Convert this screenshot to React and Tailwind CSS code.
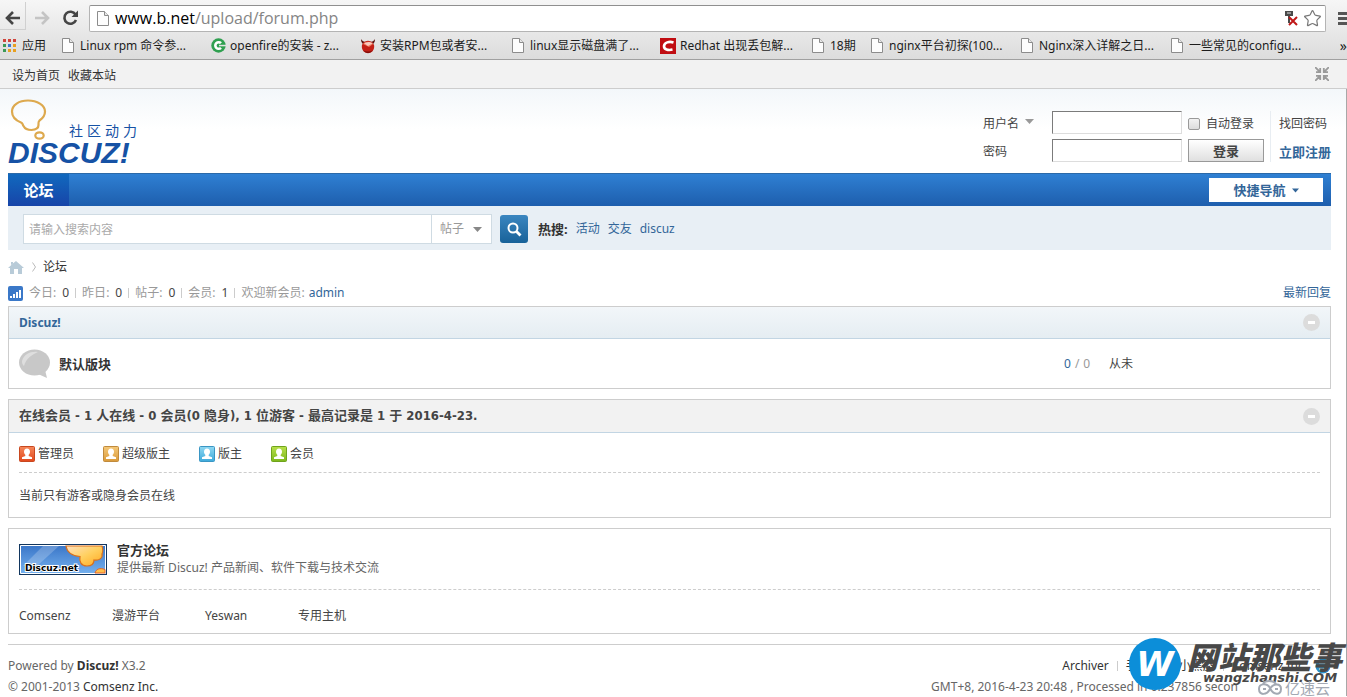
import React, { useState } from "react";
import clsx from "clsx";
import { Star } from "lucide-react";

const bookmarks = [
  { icon: "page", label: "Linux rpm 命令参..." },
  { icon: "oschina", label: "openfire的安装 - z..." },
  { icon: "devil", label: "安装RPM包或者安..." },
  { icon: "page", label: "linux显示磁盘满了..." },
  { icon: "csdn", label: "Redhat 出现丢包解..." },
  { icon: "page", label: "18期", short: true },
  { icon: "page", label: "nginx平台初探(100..." },
  { icon: "page", label: "Nginx深入详解之日..." },
  { icon: "page", label: "一些常见的configu..." },
];

const appDots = [
  "#d0453c", "#d0453c", "#d0453c",
  "#3b9a56", "#3c78d0", "#e8a020",
  "#3b9a56", "#e8a020", "#e8a020",
];

const stats = [
  { label: "今日", value: "0" },
  { label: "昨日", value: "0" },
  { label: "帖子", value: "0" },
  { label: "会员", value: "1" },
];

const roles = [
  { name: "管理员", from: "#f5875a", to: "#e2481c", border: "#c8471f" },
  { name: "超级版主", from: "#f5c878", to: "#d99a3a", border: "#c08a3c" },
  { name: "版主", from: "#8fd8f2", to: "#3eaadb", border: "#3a96c4" },
  { name: "会员", from: "#b8e04a", to: "#7db81c", border: "#6fa31c" },
];

const friendLinks = ["Comsenz", "漫游平台", "Yeswan", "专用主机"];

const PageIcon = () => (
  <svg width="12" height="15" viewBox="0 0 12 15" className="shrink-0">
    <path d="M.5.5h7l4 4v10H.5z" fill="#fdfdfd" stroke="#8c8c8c" />
    <path d="M7.5.5v4h4" fill="#e8e8e8" stroke="#8c8c8c" />
  </svg>
);

const BookmarkIcon = ({ type }) => {
  if (type === "oschina")
    return (
      <svg width="15" height="15" viewBox="0 0 15 15">
        <circle cx="7.5" cy="7.5" r="7.2" fill="#2fa050" />
        <path d="M10 5.2A3.3 3.3 0 1 0 10 9.8" fill="none" stroke="#fff" strokeWidth="2.6" />
        <path d="M8 6.800h7v1.500H8z" fill="#e2e2e2" />
      </svg>
    );
  if (type === "devil")
    return (
      <svg width="16" height="16" viewBox="0 0 16 16">
        <path d="M1 1c0 3 1 4 2 5l3-2C4 4 2 3 1 1zM15 1c0 3-1 4-2 5l-3-2c2 0 4-1 5-3z" fill="#5a1410" />
        <circle cx="8" cy="9" r="6.2" fill="#c41f16" />
        <path d="M3 6c3-3 7-3 10 0l-4 3z" fill="#ef7c60" />
        <path d="M4 5l4 3 5-3-4-1z" fill="#fff" opacity=".6" />
        <path d="M3 12c3 4 7 4 10 0-3 2-7 2-10 0z" fill="#7c0f0b" />
      </svg>
    );
  if (type === "csdn")
    return (
      <svg width="16" height="16" viewBox="0 0 16 16">
        <path d="M0 0h16v16H0z" fill="#c00d12" />
        <path d="M13.500 4.400C9 3 4.500 4.500 4 8c-.2 3.500 4 4.500 8.500 3.600" fill="none" stroke="#fff" strokeWidth="2.600" />
      </svg>
    );
  return <PageIcon />;
};

const Caret = ({ className }) => (
  <svg width="9" height="5" viewBox="0 0 9 5" className={className}>
    <path d="M0 0h9L4.500 5z" fill="currentColor" />
  </svg>
);

const MinusButton = () => (
  <button aria-label="收起" className="mr-2.5">
    <svg width="17" height="17" viewBox="0 0 17 17">
      <circle cx="8.500" cy="8.500" r="8.500" fill="#dcdcdc" />
      <path d="M5 7h7v3H5z" fill="#fff" />
    </svg>
  </button>
);

const Divider = ({ className = "mx-1.5" }) => <span className={clsx("h-2.5 w-px bg-[#cccccc]", className)} />;

const Browser = () => (
  <div className="border-b border-[#a0a0a0] bg-linear-to-b from-[#f6f6f6] to-[#dcdcdc]">
    <div className="flex h-8 items-center">
      <button aria-label="后退" className="flex h-7 w-[26px] items-center justify-center border-r border-b border-[#d0d0d0] pt-1">
        <svg width="16" height="14" viewBox="0 0 16 14" fill="none" stroke="#454545" strokeWidth="2.600">
          <path d="M15 7H3M8 1L2 7l6 6" />
        </svg>
      </button>
      <button aria-label="前进" className="flex w-8 items-center justify-center pt-1">
        <svg width="16" height="14" viewBox="0 0 16 14" fill="none" stroke="#c4c4c4" strokeWidth="2.600">
          <path d="M1 7h12M8 1l6 6-6 6" />
        </svg>
      </button>
      <button aria-label="刷新" className="flex w-6 items-center justify-center pt-1">
        <svg width="17" height="16" viewBox="0 0 17 16">
          <path d="M13.500 4.500A6 6 0 1 0 14 10" fill="none" stroke="#454545" strokeWidth="2.600" />
          <path d="M16 .5V7H9.500z" fill="#454545" />
        </svg>
      </button>
      <div className="mt-1 ml-[7px] flex h-[27px] flex-1 items-center rounded-xs border border-[#b4b4b4] border-t-[#8f8f8f] bg-white px-[7px]">
        <PageIcon />
        <p className="ml-1.5 flex-1 font-['Open_Sans','Noto_Sans',sans-serif] text-base leading-6 text-[#858585]">
          <span className="text-black">www.b.net</span>/upload/forum.php
        </p>
        <svg width="14" height="15" viewBox="0 0 14 15" className="mr-1">
          <path d="M0 0h8v5H5v7H3V5H0z" fill="#4a4a4a" />
          <path d="M2 2h4" stroke="#ddd" />
          <path d="M4 6l8 8M12 6l-8 8" stroke="#c01818" strokeWidth="2" />
        </svg>
        <Star size={19} strokeWidth={1.5} className="-mr-1 text-[#777777]" />
      </div>
      <button aria-label="菜单" className="mt-1 ml-3 w-[9px] space-y-[2px]">
        <span className="block h-[3px] bg-[#555555]" />
        <span className="block h-[3px] bg-[#555555]" />
        <span className="block h-[3px] bg-[#555555]" />
      </button>
    </div>
    <div className="flex h-[27px] items-center pl-[3px] text-[12px] text-[#1c1c1c]">
      <a href="#apps" className="flex w-[57px] shrink-0 items-center gap-1.5">
        <span className="grid grid-cols-3 gap-[2px]">
          {appDots.map((color, i) => (
            <span key={i} className="size-[3px]" style={{ background: color }} />
          ))}
        </span>
        应用
      </a>
      {bookmarks.map(({ icon, label, short }) => (
        <a
          key={label}
          href="#bookmark"
          className={clsx("flex shrink-0 items-center gap-1 whitespace-nowrap", short ? "w-[59px]" : "w-[150px]")}
        >
          <span className="flex w-4 shrink-0 justify-center">
            <BookmarkIcon type={icon} />
          </span>
          {label}
        </a>
      ))}
      <span className="ml-auto text-sm">»</span>
    </div>
  </div>
);

const TopStrip = () => (
  <div className="flex h-[29px] items-center gap-2 border-b border-[#cdcdcd] bg-[#f2f2f2] px-3 text-[#333333]">
    <a href="#home" className="pt-[3px]">设为首页</a>
    <a href="#fav" className="pt-[3px]">收藏本站</a>
    <button aria-label="切换宽度" className="mr-[6px] ml-auto">
      <svg width="14" height="14" viewBox="0 0 14 14" fill="none" stroke="#9a9a9a" strokeWidth="1.800">
        <path d="M0 0l5 5M14 0L9 5M0 14l5-5M14 14L9 9M1 5.200h4.200V1M13 5.200H8.800V1M1 8.800h4.200V13M13 8.800H8.800V13" />
      </svg>
    </button>
  </div>
);

const Logo = () => (
  <a href="#logo" className="relative block h-[84px] w-[140px] text-[#1652a5]">
    <svg width="40" height="44" viewBox="0 0 40 44" fill="none" stroke="#dda94e" strokeWidth="2.200" className="absolute top-[10px] left-[2px]">
      <path d="M18 1.500C9 1.500 2 6 2 12.500c0 6 4 9 9 11 2 .8 1.500 2 2.500 3.500 1.500 3 4 4 8 4 4-.2 7-2 7-5 0-1.500-.5-3 1-4.500 3-2 5.500-5 5.500-9C35 6 27 1.500 18 1.500z" />
      <ellipse cx="29.500" cy="36.500" rx="4.200" ry="3.200" />
    </svg>
    <span className="absolute top-[32px] left-[61px] flex gap-1 text-sm leading-5">
      <span>社</span>
      <span>区</span>
      <span>动</span>
      <span>力</span>
    </span>
    <span className="absolute top-[48px] left-0 font-['Liberation_Sans',sans-serif] text-[30px] leading-8 font-bold italic">
      DISCUZ!
    </span>
  </a>
);

const inputStyle = "h-[23px] w-[130px] border border-[#dddddd] border-t-[#7b7b7b] border-l-[#7b7b7b] bg-white px-1 outline-none";

const LoginForm = () => (
  <form className="mt-[22px] flex text-[#444444]" onSubmit={(e) => e.preventDefault()}>
    <div className="grid grid-cols-[63px_130px_76px] items-center gap-x-1.5 gap-y-[5px]">
      <div className="relative flex items-center pt-0.5">
        <select aria-label="登录方式" className="w-[54px] appearance-none bg-transparent outline-none">
          <option>用户名</option>
          <option>UID</option>
        </select>
        <Caret className="pointer-events-none absolute top-1.5 left-[42px] text-[#999999]" />
      </div>
      <input aria-label="用户名" className={inputStyle} />
      <label className="flex items-center gap-1.5 pt-0.5">
        <input
          type="checkbox"
          className="size-3 appearance-none rounded-[2px] border border-[#999999] bg-linear-to-b from-[#f2f2f2] to-[#dcdcdc] checked:bg-[#2b7acd]"
        />
        自动登录
      </label>
      <label htmlFor="password" className="pt-0.5">密码</label>
      <input id="password" type="password" className={inputStyle} />
      <button className="h-[23px] border border-[#999999] bg-linear-to-b from-white to-[#e0e0e0] text-[13px] font-bold">登录</button>
    </div>
    <div className="ml-1.5 flex flex-col gap-2.5 border-l border-[#e8edf2] pt-1 pl-2">
      <a href="#lost" className="leading-[18px]">找回密码</a>
      <a href="#register" className="text-[13px] leading-[18px] font-bold text-[#336699]">立即注册</a>
    </div>
  </form>
);

const SearchBar = () => {
  const [keyword, setKeyword] = useState("");

  return (
    <div className="flex h-11 items-center bg-[#e8eff5] px-[15px] pt-0.5 text-[#336699]">
      <input
        aria-label="搜索"
        placeholder="请输入搜索内容"
        value={keyword}
        onChange={(e) => setKeyword(e.target.value)}
        className="h-[30px] w-[409px] border border-[#cfdbe3] bg-white px-[5px] outline-none placeholder:text-[#aaaaaa]"
      />
      <div className="relative">
        <select aria-label="类型" className="block h-[30px] w-[60px] appearance-none border border-l-0 border-[#cfdbe3] bg-white pl-2 text-[#999999] outline-none">
          <option>帖子</option>
          <option>用户</option>
        </select>
        <Caret className="pointer-events-none absolute top-[13px] right-2.5 text-[#888888]" />
      </div>
      <button aria-label="搜索" className="ml-2 flex h-7 w-[28px] items-center justify-center rounded-[3px] bg-linear-to-b from-[#3a86c0] to-[#186299] text-white">
        <svg width="15" height="15" viewBox="0 0 15 15" fill="none" stroke="currentColor">
          <circle cx="6" cy="6" r="4.500" strokeWidth="2" />
          <path d="M9.500 9.500l4 4" strokeWidth="2.800" />
        </svg>
      </button>
      <strong className="ml-2.5 text-[13px] text-[#333333]">热搜:</strong>
      <a href="#s1" className="ml-2">活动</a>
      <a href="#s2" className="ml-2">交友</a>
      <a href="#s3" className="ml-2">discuz</a>
    </div>
  );
};

const RoleIcon = ({ from, to, border, id }) => (
  <svg width="16" height="16" viewBox="0 0 16 16">
    <defs>
      <linearGradient id={id} x1="0" y1="0" x2="0" y2="1">
        <stop offset="0" stopColor={from} />
        <stop offset="1" stopColor={to} />
      </linearGradient>
    </defs>
    <rect x=".5" y=".5" width="15" height="15" rx="1" fill={`url(#${id})`} stroke={border} />
    <path d="M8 2.500c2 0 3 1.300 3 3.200 0 1.300-.6 2.500-1.300 3V10l3.300 1.300V13H3v-1.700L6.300 10V8.700C5.600 8.200 5 7 5 5.700c0-1.900 1-3.200 3-3.200z" fill="#fff" />
  </svg>
);

const DiscuzBanner = () => (
  <svg width="88" height="31" viewBox="0 0 88 31">
    <defs>
      <linearGradient id="sky" x1="0" y1="0" x2="0" y2="1">
        <stop offset="0" stopColor="#3a76c8" />
        <stop offset="1" stopColor="#74b0ee" />
      </linearGradient>
      <linearGradient id="cloud" x1="0" y1="0" x2="1" y2="1">
        <stop offset="0" stopColor="#ffe0c0" />
        <stop offset=".5" stopColor="#ffd060" />
        <stop offset="1" stopColor="#ffa81e" />
      </linearGradient>
    </defs>
    <path d="M0 0h88v31H0z" fill="#12365e" />
    <path d="M1.500 1.500h85v28h-85z" fill="url(#sky)" stroke="#fff" />
    <path d="M24 2h16L18 22H4z" fill="#fff" opacity=".22" />
    <path d="M47 2c1 6 6 10 14 10.500-1 5 1 9.500 7 9.500 5 0 7-3 7-6 5 1 9-2 8-6 1-2 1-5 0-8z" fill="url(#cloud)" stroke="#d9701c" strokeWidth="1.200" />
    <path d="M76 29c1-4 5-5.500 10-3.500V29z" fill="#ffc04a" stroke="#e2622a" />
    <text x="6" y="27" fontFamily="DejaVu Sans, sans-serif" fontSize="9" fontWeight="bold" fill="#000" stroke="#fff" strokeWidth="2" paintOrder="stroke">
      Discuz.net
    </text>
  </svg>
);

const Watermark = () => (
  <div className="absolute right-0 bottom-0 flex h-[62px] items-start">
    <svg width="52" height="52" viewBox="0 0 52 52" className="mt-1">
      <circle cx="26" cy="26" r="26" fill="#0c8ed9" />
      <text x="26" y="38" textAnchor="middle" fontFamily="DejaVu Sans, sans-serif" fontSize="34" fontWeight="bold" fontStyle="italic" fill="#fff">
        W
      </text>
    </svg>
    <div className="ml-1.5 flex w-[160px] flex-col">
      <span className="mt-1.5 font-['Noto_Sans_CJK_SC',sans-serif] text-[31px] leading-8 font-black whitespace-nowrap text-[#484848] italic">
        网站那些事
      </span>
      <span className="pl-4 font-['DejaVu_Sans',sans-serif] text-[13px] leading-3 font-bold whitespace-nowrap text-[#484848] italic">
        wangzhanshi.COM
      </span>
      <span className="-mt-1 flex items-center self-end pr-[17px] text-[15px] leading-4 text-[#a3a9b3]">
        <svg width="26" height="16" viewBox="0 0 26 16" fill="none" stroke="#a3a9b3" strokeWidth="2" className="mr-0.5">
          <path d="M13 8c-3-5-11-5-11 1 0 7 8 6 11 0 3-6 11-6 11 0 0 7-8 6-11-1z" />
          <path d="M6 4c2-4 10-4 13 0M6 9h3M18 9h3" />
        </svg>
        亿速云
      </span>
    </div>
  </div>
);

export default function App() {
  return (
    <div className="relative font-['Noto_Sans','Noto_Sans_CJK_SC',sans-serif] text-[12px] leading-[18px] text-[#444444]">
      <Browser />
      <TopStrip />

      <div className="border-r border-[#a8a8a8] bg-linear-to-b from-[#f3f7fa] to-white to-[40px] pr-[15px] pl-2">
        <header className="flex h-[84px] items-start justify-between">
          <Logo />
          <LoginForm />
        </header>

        <nav className="flex h-[33px] items-center justify-between border-t border-[#2b69a8] bg-linear-to-b from-[#2f80d3] to-[#1e5ead] pr-2">
          <a href="#forum" className="flex h-full w-[61px] items-center justify-center bg-linear-to-b from-[#1169be] to-[#1744a8] text-[15px] font-bold text-white">
            论坛
          </a>
          <button className="flex h-6 w-[114px] items-center justify-center gap-1.5 bg-white text-[13px] font-bold text-[#336699]">
            快捷导航
            <Caret className="w-[7px]" />
          </button>
        </nav>
        <SearchBar />

        <div className="mt-2 flex h-[18px] items-center text-[#333333]">
          <svg width="16" height="13" viewBox="0 0 16 13">
            <path d="M8 0l8 7h-2v6h-4V8H6v5H2V7H0L5 2.600V1H3v3z" fill="#b8cbd8" />
          </svg>
          <svg width="5" height="10" viewBox="0 0 5 10" fill="none" stroke="#bbb" className="mr-1.5 ml-2">
            <path d="M.5.5l3 4.500-3 4.500" />
          </svg>
          <a href="#forum">论坛</a>
        </div>

        <div className="mt-2 mb-1 flex h-[18px] items-center text-[#999999]">
          <svg width="15" height="15" viewBox="0 0 15 15" className="mr-1.5">
            <rect width="15" height="15" rx="2" fill="#3a78c8" />
            <path d="M2 10h2v2H2zM5 8h2v4H5zM8 6h2v6H8zM11 4h2v8h-2z" fill="#fff" />
          </svg>
          {stats.map(({ label, value }) => (
            <React.Fragment key={label}>
              <span className="flex gap-1.5">
                {label}: <span className="text-[#444444]">{value}</span>
              </span>
              <Divider />
            </React.Fragment>
          ))}
          <span className="flex gap-1">
            欢迎新会员: <a href="#admin" className="text-[#336699]">admin</a>
          </span>
          <a href="#new" className="ml-auto text-[#336699]">最新回复</a>
        </div>

        <section className="border border-[#cdcdcd]">
          <div className="flex h-8 items-center justify-between border-b border-[#c2d5e3] bg-linear-to-b from-[#f2f6f9] to-[#e5edf2]">
            <h2 className="pl-2.5 font-bold text-[#336699]">Discuz!</h2>
            <MinusButton />
          </div>
          <div className="flex h-[49px] items-center pl-2.5">
            <svg width="32" height="30" viewBox="0 0 32 30">
              <ellipse cx="15.500" cy="13.500" rx="15.500" ry="13" fill="#c8c8c8" />
              <path d="M19 25l9 4-2-8z" fill="#c8c8c8" />
              <path d="M3 12C5 5 12 2 19 3 12 6 7 10 5 17c-2-2-2-3-2-5z" fill="#dedede" />
            </svg>
            <a href="#default" className="ml-2 flex-1 text-[13px] font-bold text-[#333333]">默认版块</a>
            <span className="flex w-[45px] gap-1 text-[#999999]">
              <span className="text-[#336699]">0</span> / <span>0</span>
            </span>
            <span className="w-[221px]">从未</span>
          </div>
        </section>

        <section className="mt-2.5 border border-[#cdcdcd]">
          <div className="flex h-[33px] items-center justify-between border-b border-[#c2d5e3] bg-[#f2f2f2]">
            <h2 className="pl-2.5 font-['DejaVu_Sans_Condensed','DejaVu_Sans','Noto_Sans_CJK_SC',sans-serif] text-[13px] font-bold">
              在线会员 - 1 人在线 - 0 会员(0 隐身), 1 位游客 - 最高记录是 1 于 2016-4-23.
            </h2>
            <MinusButton />
          </div>
          <div className="px-2.5">
            <div className="flex h-10 items-center gap-[29px] border-b border-dashed border-[#cdcdcd] pt-0.5">
              {roles.map(({ name, ...colors }, i) => (
                <span key={name} className="flex items-center gap-[3px]">
                  <RoleIcon id={`role-${i}`} {...colors} />
                  {name}
                </span>
              ))}
            </div>
            <p className="pt-3.5 pb-3">当前只有游客或隐身会员在线</p>
          </div>
        </section>

        <section className="mt-2.5 border border-[#cdcdcd] px-2.5">
          <div className="flex items-center gap-2.5 border-b border-dashed border-[#cdcdcd] pt-3 pb-3">
            <DiscuzBanner />
            <div>
              <a href="#official" className="block text-[13px] font-bold text-[#333333]">官方论坛</a>
              <p className="text-[#666666]">提供最新 Discuz! 产品新闻、软件下载与技术交流</p>
            </div>
          </div>
          <div className="flex h-[43px] items-center pt-2">
            {friendLinks.map((link) => (
              <a key={link} href="#friend" className="w-[93px]">{link}</a>
            ))}
          </div>
        </section>

        <footer className="mt-2.5 flex justify-between border-t border-[#cdcdcd] pt-3 text-[#666666]">
          <div className="space-y-[3px]">
            <p>
              Powered by <a href="#discuz" className="font-bold text-[#333333]">Discuz!</a> X3.2
            </p>
            <p>
              © 2001-2013 <a href="#comsenz" className="text-[#333333]">Comsenz Inc.</a>
            </p>
          </div>
          <div className="space-y-[3px]">
            <p className="flex items-center justify-end text-[#333333]">
              <a href="#archiver">Archiver</a>
              <Divider className="mx-2" />
              <a href="#mobile">手机版</a>
              <Divider className="mx-2" />
              <a href="#dark">小黑屋</a>
              <Divider className="mx-2" />
              <a href="#comsenz">Comsenz Inc.</a>
              <svg width="16" height="16" viewBox="0 0 16 16" className="ml-2">
                <circle cx="8" cy="8" r="7.500" fill="#2b90c8" />
                <path d="M4 5h8M4 8h8M4 11h8" stroke="#fff" />
              </svg>
            </p>
            <p className="pr-[93px] whitespace-nowrap">GMT+8, 2016-4-23 20:48 , Processed in 0.237856 secon</p>
          </div>
        </footer>
      </div>
      <Watermark />
    </div>
  );
}
